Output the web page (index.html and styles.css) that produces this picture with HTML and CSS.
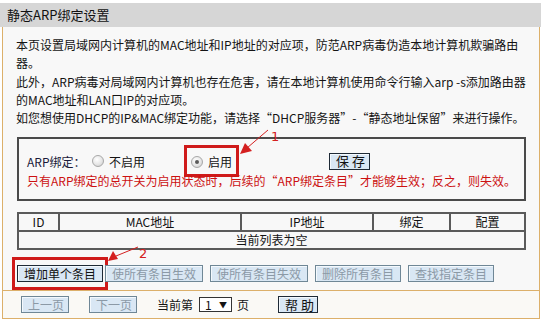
FILE: index.html
```html
<!DOCTYPE html>
<html lang="zh-CN">
<head>
<meta charset="utf-8">
<title>静态ARP绑定设置</title>
<link rel="stylesheet" href="styles.css">
</head>
<body>
<div class="panel">
  <div class="panel-title">静态ARP绑定设置</div>
  <div class="panel-body">
    <div class="intro">
      <p>本页设置局域网内计算机的MAC地址和IP地址的对应项，防范ARP病毒伪造本地计算机欺骗路由器。</p>
      <p>此外，ARP病毒对局域网内计算机也存在危害，请在本地计算机使用命令行输入arp -s添加路由器的MAC地址和LAN口IP的对应项。</p>
      <p>如您想使用DHCP的IP&amp;MAC绑定功能，请选择“DHCP服务器”-“静态地址保留”来进行操作。</p>
    </div>

    <div class="bind-box">
      <div class="bind-row">
        <span class="bind-label">ARP绑定：</span>
        <label class="radio-opt"><span class="radio"></span>不启用</label>
        <label class="radio-opt highlight"><span class="radio checked"></span>启用</label>
        <button class="btn btn-save">保 存</button>
      </div>
      <div class="bind-note">只有ARP绑定的总开关为启用状态时，后续的“ARP绑定条目”才能够生效；反之，则失效。</div>
    </div>

    <table class="list">
      <thead>
        <tr><th class="c-id">ID</th><th class="c-mac">MAC地址</th><th class="c-ip">IP地址</th><th class="c-bind">绑定</th><th class="c-cfg">配置</th></tr>
      </thead>
      <tbody>
        <tr><td colspan="5">当前列表为空</td></tr>
      </tbody>
    </table>

    <div class="actions">
      <span class="highlight-box"><button class="btn">增加单个条目</button></span>
      <button class="btn" disabled>使所有条目生效</button>
      <button class="btn" disabled>使所有条目失效</button>
      <button class="btn" disabled>删除所有条目</button>
      <button class="btn" disabled>查找指定条目</button>
    </div>
  </div>
  <div class="pager">
    <button class="btn btn-page" disabled>上一页</button>
    <button class="btn btn-page" disabled>下一页</button>
    <span class="pager-text">当前第</span>
    <span class="select"><span>1</span><span class="caret">▼</span></span>
    <span class="pager-text">页</span>
    <button class="btn btn-help">帮 助</button>
  </div>

  <svg class="annot" width="543" height="322" viewBox="0 0 543 322" xmlns="http://www.w3.org/2000/svg">
    <line x1="268" y1="130" x2="247" y2="148" stroke="#d42020" stroke-width="1"/>
    <polygon points="240,154 245,143 252,151" fill="#d42020"/>
    <text x="271" y="141" class="annot-num">1</text>
    <line x1="138" y1="247" x2="116" y2="256" stroke="#d42020" stroke-width="1"/>
    <polygon points="108,261 113,251 118,259" fill="#d42020"/>
    <text x="139" y="258" class="annot-num">2</text>
  </svg>
</div>
</body>
</html>
```

FILE: styles.css
```css
html, body {
  margin: 0;
  padding: 0;
  background: #ffffff;
}

body {
  font-family: "Noto Sans CJK SC", "Noto Sans", sans-serif;
  font-size: 12px;
  color: #141414;
}

.btn {
  font-family: "Noto Sans CJK SC", "Noto Sans", sans-serif;
  font-size: 12px;
  line-height: 14px;
  height: 17px;
  padding: 0 6px;
  background: #d9e7f4;
  border: 1px solid #1e2a36;
  color: #111;
  border-radius: 0;
  box-shadow: inset 1px 1px 0 #f4f9fd;
  margin: 0;
  white-space: nowrap;
  box-sizing: border-box;
}

.btn:disabled {
  color: #8b99a6;
  border-color: #6f8796;
}

.panel {
  position: relative;
  width: 541px;
  padding-top: 3px;
}

.panel-title {
  height: 24px;
  line-height: 24px;
  background: #d6d6d6;
  padding-left: 7px;
  font-size: 13px;
  color: #111;
}

.panel-body {
  margin: 0 1px 0 2px;
  border-left: 1px solid #dcb06a;
  border-right: 1px solid #dcb06a;
  background: #f8f8f8;
  padding: 9px 6px 0 13px;
  height: 263px;
  box-sizing: border-box;
}

.intro p {
  margin: 0;
  line-height: 18.3px;
}

.bind-box {
  margin: 10px 0 0 1px;
  width: 509px;
  box-sizing: border-box;
  border: 2px solid #4a4a4a;
  padding: 11px 0 9px 8px;
}

.bind-row {
  display: flex;
  align-items: center;
  height: 22px;
}

.bind-label {
  width: 65px;
  color: #1a1a3a;
}

.radio-opt {
  display: flex;
  align-items: center;
  gap: 5px;
}

.radio {
  width: 10px;
  height: 10px;
  border-radius: 50%;
  border: 1px solid #a8a8a8;
  background: radial-gradient(circle at 40% 35%, #ffffff 0%, #e6e6e6 55%, #c8c8c8 100%);
  position: relative;
}

.radio.checked::after {
  content: "";
  position: absolute;
  left: 3px;
  top: 3px;
  width: 4px;
  height: 4px;
  border-radius: 50%;
  background: #5a5a5a;
}

.radio-opt.highlight {
  margin-left: 39px;
  border: 3px solid #cf1a1a;
  padding: 5px 4px 4px 4px;
  height: 17px;
}

.btn-save {
  margin-left: 90px;
  width: 41px;
  font-size: 13px;
}

.bind-note {
  color: #cc1111;
  line-height: 18px;
  margin-top: 0;
}

.list {
  margin: 11px 0 0 1px;
  width: 509px;
  border-collapse: collapse;
  border: 2px solid #4a4a4a;
  background: #f8f8f8;
}

.list th, .list td {
  border: 2px solid #5a5a5a;
  height: 16px;
  padding: 0;
  text-align: center;
  font-weight: normal;
  line-height: 16px;
}

.list th {
  color: #111;
}

.c-id { width: 39px; }
.c-mac { width: 180px; }
.c-ip { width: 130px; }
.c-bind { width: 75px; }

.actions {
  display: flex;
  align-items: center;
  gap: 7px;
  margin-top: 7px;
  margin-left: -4px;
}

.highlight-box {
  display: inline-flex;
  border: 3px solid #cf1a1a;
  padding: 5px 2px 5px 2px;
  margin-right: -10px;
}

.pager {
  margin: 0 1px 0 2px;
  border: 1px solid #dcb06a;
  background: #faf9f5;
  height: 29px;
  display: flex;
  align-items: center;
  padding-left: 18px;
  box-sizing: border-box;
}

.btn-page {
  width: 48px;
  margin-right: 20px;
}

.btn-help {
  margin-left: 23px;
  width: 40px;
  font-size: 13px;
}

.pager-text {
  margin-right: 6px;
}

.select {
  display: inline-flex;
  align-items: center;
  justify-content: space-between;
  width: 33px;
  height: 15px;
  box-sizing: border-box;
  border: 1px solid #333;
  background: #fff;
  padding: 0 4px 0 5px;
  margin-right: 5px;
  font-size: 12px;
}

.caret {
  font-size: 8px;
}

.annot {
  position: absolute;
  left: 0;
  top: 0;
  pointer-events: none;
}

.annot-num {
  font-family: "DejaVu Sans", sans-serif;
  font-size: 13px;
  fill: #d42020;
}
```
